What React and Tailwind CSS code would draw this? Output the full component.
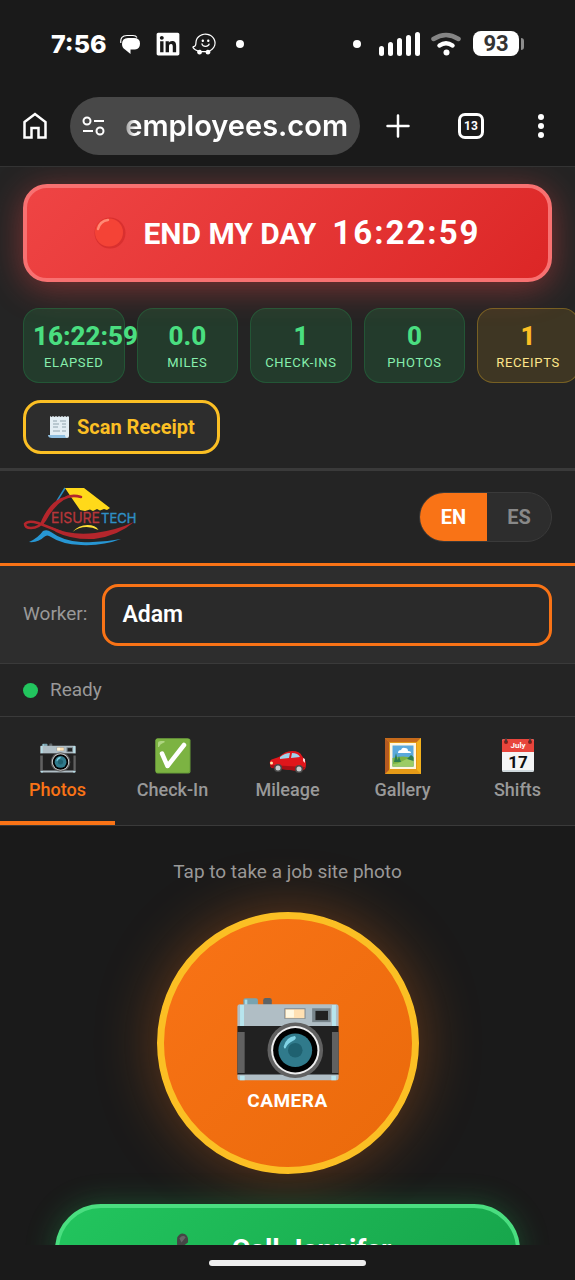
import { FaLinkedin, FaWaze } from 'react-icons/fa'

const STATS = [
  { value: '16:22:59', label: 'ELAPSED' },
  { value: '0.0', label: 'MILES' },
  { value: '1', label: 'CHECK-INS' },
  { value: '0', label: 'PHOTOS' },
  { value: '1', label: 'RECEIPTS', gold: true },
]

const TABS = [
  { label: 'Photos', Icon: CameraIcon, size: 'w-9 h-[30px] mt-[5px]', active: true },
  { label: 'Check-In', Icon: CheckIcon, size: 'w-9 h-9' },
  { label: 'Mileage', Icon: CarIcon, size: 'w-[38px] h-9' },
  { label: 'Gallery', Icon: FrameIcon, size: 'w-9 h-9' },
  { label: 'Shifts', Icon: CalendarIcon, size: 'w-9 h-9' },
]

function CameraIcon({ className }) {
  return (
    <svg className={className} viewBox="0 0 310 254" aria-hidden="true">
      <path d="M20 26V10q0-6 6-6h32q6 0 6 6v16z" fill="#78a3b0" />
      <path d="M24 8h8v18h-8z" fill="#a8dbe6" />
      <path d="M80 26V10q0-7 7-7h12q7 0 7 7v16z" fill="#5c6366" />
      <path d="M2 90V30q0-8 8-8h290q8 0 8 8v60z" fill="#b0bec5" />
      <path d="M10 24h12v64H10zM288 24h12v64h-12z" fill="#b7e5ee" />
      <path d="M2 88h306v148H2z" fill="#212121" />
      <path d="M2 234h306v10q0 8-8 8H10q-8 0-8-8z" fill="#b0bec5" />
      <path d="M10 238h14v14H10zM286 238h14v14h-14z" fill="#b7e5ee" />
      <path d="M2 106h22v124H2zM288 106h20v124h-20z" fill="#616161" />
      <path d="M144 34h64v32h-64z" fill="#82888b" />
      <path d="M147 37h58v27h-58z" fill="#ffe0b2" />
      <path d="M149 39h24v23h-24z" fill="#fff8e1" />
      <path d="M228 34h56v42h-56z" fill="#78858b" />
      <path d="M238 42h38v28h-38z" fill="#212121" />
      <circle cx="177" cy="161" r="84" fill="#616161" />
      <circle cx="177" cy="161" r="73" fill="#eeeeee" />
      <circle cx="177" cy="161" r="67" fill="#000" />
      <circle cx="177" cy="161" r="51" fill="#307a8b" />
      <circle cx="177" cy="161" r="22" fill="#1f6170" />
      <path d="M142 150q7-29 34-32 8 8-8 16-14 6-20 20-5 5-6-4z" fill="#81d4e6" />
    </svg>
  )
}

function CheckIcon({ className }) {
  return (
    <svg className={className} viewBox="0 0 36 36" aria-hidden="true">
      <rect x=".5" y=".5" width="35" height="35" rx="2" fill="#689f38" />
      <rect x=".5" y=".5" width="34" height="34" rx="2" fill="#7cb342" />
      <path d="M3 9V5q0-2 3-2h3q2 1-1 2-3 1-4 4z" fill="#aed581" />
      <path d="M7 15.500l5.500 12.500L29 7" fill="none" stroke="#fff" strokeWidth="4.500" strokeLinecap="round" strokeLinejoin="round" />
    </svg>
  )
}

function CarIcon({ className }) {
  return (
    <svg className={className} viewBox="0 0 38 36" aria-hidden="true">
      <path d="M1 26Q0 22 4 21l6-2q6-6 13-6 8 0 10 5l3 4q2 4 0 9l-4 2L3 30q-2-1-2-4z" fill="#e0161b" />
      <path d="M1 27l35 2-1 3-6 1-25-3q-3-1-3-3z" fill="#a80f15" />
      <path d="M11 19q5-4 10-4l-1 5-9 1zM23 15q6 0 8 4l-9 1z" fill="#9fd3ea" />
      <circle cx="9" cy="30" r="4" fill="#4a4a4a" />
      <circle cx="9" cy="30" r="2.500" fill="#c8ccce" />
      <circle cx="30" cy="31" r="4" fill="#4a4a4a" />
      <circle cx="30" cy="31" r="2.500" fill="#c8ccce" />
      <circle cx="2.500" cy="25" r="1.500" fill="#ffe9a8" />
      <path d="M34 20l2 1v4l-2-2z" fill="#ffd5d5" />
    </svg>
  )
}

function FrameIcon({ className }) {
  return (
    <svg className={className} viewBox="0 0 36 36" aria-hidden="true">
      <path d="M0 0h36v36H0z" fill="#e59a17" />
      <path d="M0 0h36l-4 4H4z" fill="#c66a1b" />
      <path d="M0 0l4 4v28l-4 4z" fill="#b65a20" />
      <path d="M36 0v36l-4-4V4z" fill="#f3b11c" />
      <path d="M5 5h26v26H5z" fill="#fff6e0" />
      <path d="M7.500 7.500h21v21h-21z" fill="#5aa9dc" />
      <path d="M7.500 20q10-3 21 0v8.500h-21z" fill="#7cb342" />
      <path d="M16 24q6-4 12.500-4v8.500h-21V26q5 0 8.500-2z" fill="#9ccc65" />
      <path d="M9 24l2-9 2 9zM12 24l2-6 2 6zM22 21l4-4 2.500 2v4z" fill="#2e7d4f" />
      <path d="M13 15q0-3 3-3 1-3 4-2 3 0 3 3 3 0 3 2z" fill="#fff" />
    </svg>
  )
}

function CalendarIcon({ className }) {
  return (
    <svg className={className} viewBox="0 0 36 36" aria-hidden="true">
      <rect x="2" y="1" width="32" height="33" rx="2" fill="#f5f5f5" />
      <path d="M2 14V3q0-2 2-2h28q2 0 2 2v11z" fill="#e8453c" />
      <path d="M2 32h32q0 2-2 2H4q-2 0-2-2z" fill="#cfd8dc" />
      <circle cx="6" cy="4" r="2" fill="#7b1f1a" />
      <circle cx="30" cy="4" r="2" fill="#7b1f1a" />
      <path d="M6 0v4M30 0v4" stroke="#3b3b3b" strokeWidth="1.500" />
      <text x="18" y="10" textAnchor="middle" fontSize="8" fontWeight="700" fill="#fff">July</text>
      <text x="18" y="30" textAnchor="middle" fontSize="17" fontWeight="700" fill="#111">17</text>
    </svg>
  )
}

function ReceiptIcon() {
  return (
    <svg className="w-[22px] h-6" viewBox="0 0 22 24" aria-hidden="true">
      <path d="M2 1l1.500 1L5 1l1.500 1L8 1l1.500 1L11 1l1.500 1L14 1l1.500 1L17 1l1.500 1L20 1l1 1v19q0 2-2 2H5L2 20z" fill="#e3eef4" />
      <path d="M0 20h17q0 3 3 3H4q-4 0-4-3z" fill="#8fbfe0" />
      <path d="M5 6h4M12 6h6M5 9h6M14 9h4M5 12h5M14 12h4M5 16h7M14 16h4" stroke="#90a4ae" strokeWidth="1" />
    </svg>
  )
}

function Logo() {
  return (
    <svg className="w-[118px] h-[60px]" viewBox="0 0 118 60" role="img" aria-label="Leisure Tech">
      <path d="M42 1L34 14" stroke="#2a8fc4" strokeWidth="1.500" fill="none" />
      <path d="M42 1h19l26 20-3 2-3-1-4 1.500-3-1.500-4 2-3-1.500-5 1.500-5-1L48 10z" fill="#ffd91a" />
      <path d="M49.500 45q6-7 15-7 8 0 11 5-6-3-12-3-8 0-14 5z" fill="#ffe135" />
      <text x="28" y="36" fontSize="14" fill="#b7363a" stroke="#b7363a" strokeWidth=".3" fontFamily="Inter, sans-serif">EISURE</text>
      <text x="78" y="36" fontSize="13" fill="#2f8fc4" stroke="#2f8fc4" strokeWidth=".4" fontFamily="Inter, sans-serif">TECH</text>
      <path d="M58 10Q48 7 40 12 30 18 22 33 16 41 8 41 2 41 2 37 5 33 15 36 28 41 38 45" fill="none" stroke="#b4262c" strokeWidth="2.500" strokeLinecap="round" />
      <path d="M46 9Q34 14 26 27L20 38 17 37Q25 17 38 11z" fill="#b4262c" />
      <path d="M28 40q20 9 44 6 22-3 39-11-16 14-40 17-22 1-38-7z" fill="#b4262c" />
      <path d="M6 55q9-4 14-11 4-2 8 1 12 9 30 10 20 1 40-3-18 7-40 6-20-1-30-8-4-3-7 0-6 6-15 5z" fill="#2796d3" />
    </svg>
  )
}

function StatusBar() {
  return (
    <div className="flex items-center justify-between h-[87px] pl-[51px] pr-14 font-[Inter,sans-serif]">
      <div className="flex items-center">
        <span className="text-[25px] font-extrabold leading-8 w-[57px] whitespace-nowrap">7:56</span>
        <svg className="w-5 h-5 ml-3" viewBox="0 0 20 20" aria-hidden="true">
          <path d="M.800 9Q0 1.500 7 1.500h6q3 0 4 2" fill="none" stroke="#fff" strokeWidth="1.200" />
          <path d="M8 4h6q6 0 6 5.500 0 5.500-5 6h-4.500V20L5 15.500Q2 13.500 2 10q0-6 6-6z" fill="#fff" />
        </svg>
        <FaLinkedin className="w-6 h-[26px] ml-4" />
        <FaWaze className="w-6 h-[26px] ml-3" />
        <span className="w-2 h-2 ml-5 rounded-full bg-white" />
      </div>
      <div className="flex items-center">
        <span className="w-2 h-2 mr-[18px] rounded-full bg-white" />
        <div className="flex items-end gap-1 h-6">
          <span className="w-[5px] h-2.5 rounded-full bg-white" />
          <span className="w-[5px] h-3.5 rounded-full bg-white" />
          <span className="w-[5px] h-[18px] rounded-full bg-white" />
          <span className="w-[5px] h-[21px] rounded-full bg-white" />
          <span className="w-[5px] h-6 rounded-full bg-white" />
        </div>
        <svg className="w-[30px] h-6 ml-[11px]" viewBox="0 0 30 24" aria-hidden="true">
          <path d="M2.500 7Q15-1 27.500 7" fill="none" stroke="#858585" strokeWidth="4.500" strokeLinecap="round" />
          <path d="M8.500 13.500Q15 9 21.500 13.500" fill="none" stroke="#fff" strokeWidth="4.500" strokeLinecap="round" />
          <circle cx="15.500" cy="20.500" r="3" fill="#fff" />
        </svg>
        <span className="flex items-center justify-center w-[46px] h-[25px] ml-3 rounded-lg bg-white text-[#333] text-[22px] leading-6 font-bold font-[Roboto,sans-serif]">93</span>
        <span className="w-[3px] h-3 ml-0.5 -mr-[5px] rounded-r-sm bg-[#8d8d8d]" />
      </div>
    </div>
  )
}

function BrowserBar() {
  return (
    <div className="flex items-center h-20 pb-3 pt-2.5 pl-[23px] pr-7 border-b border-[#333]">
      <button aria-label="Home">
        <svg className="w-6 h-[27px]" viewBox="0 0 24 27" fill="none" stroke="#fff" strokeWidth="2.500" aria-hidden="true">
          <path d="M1.500 10L12 2l10.500 8v15.500H15.500V16h-7v9.500h-7z" />
        </svg>
      </button>
      <div className="flex flex-1 items-center h-[58px] ml-[23px] pl-3 pr-3 rounded-full bg-[#484848] overflow-hidden">
        <svg className="w-[23px] h-5 shrink-0" viewBox="0 0 23 20" fill="none" stroke="#fff" strokeWidth="2" aria-hidden="true">
          <circle cx="5" cy="5" r="3.500" />
          <path d="M12 5h10M1 15h10" />
          <circle cx="18" cy="15" r="3.500" />
        </svg>
        <input
          aria-label="Address"
          className="flex-1 min-w-0 h-10 ml-3 bg-transparent text-right text-[29px] font-semibold font-[Inter,sans-serif] outline-none mask-l-from-92% mask-l-to-100%"
          defaultValue="employees.com"
        />
      </div>
      <button aria-label="New tab" className="ml-[26px]">
        <svg className="w-6 h-6" viewBox="0 0 24 24" stroke="#fff" strokeWidth="2.500" strokeLinecap="round" aria-hidden="true">
          <path d="M12 1.500v21M1.500 12h21" />
        </svg>
      </button>
      <button aria-label="Tabs" className="flex items-center justify-center w-[26px] h-[26px] ml-12 border-[3px] border-white rounded-[7px] text-xs font-bold">13</button>
      <button aria-label="Menu" className="flex flex-col items-center gap-[3px] w-3 ml-[51px]">
        <span className="w-1.5 h-1.5 rounded-full bg-white" />
        <span className="w-1.5 h-1.5 rounded-full bg-white" />
        <span className="w-1.5 h-1.5 rounded-full bg-white" />
      </button>
    </div>
  )
}

function DayPanel() {
  return (
    <section className="px-[23px] pt-[17px] pb-[14px] bg-[#242424] border-b-[3px] border-[#3a3a3a] overflow-hidden">
      <button className="flex items-center justify-center w-full h-[98px] rounded-3xl border-4 border-[#f87171] bg-linear-135 from-[#ef4444] to-[#dc2626] shadow-[0_6px_34px_rgba(239,68,68,0.45)]">
        <svg className="w-8 h-8 mr-[17px]" viewBox="0 0 32 32" aria-hidden="true">
          <circle cx="16" cy="16" r="15.500" fill="#d9302f" />
          <circle cx="15" cy="15.500" r="14" fill="#f44336" />
          <path d="M4 12q2-8 10-9" fill="none" stroke="#ff8a75" strokeWidth="2.500" strokeLinecap="round" />
        </svg>
        <span className="text-[30px] font-bold">END MY DAY</span>
        <span className="ml-4 text-[33px] font-bold tracking-[2px]">16:22:59</span>
      </button>
      <div className="flex gap-3 mt-[26px]">
        {STATS.map(({ value, label, gold }) => (
          <div
            key={label}
            className={`w-[19.2%] h-[75px] shrink-0 px-[9px] pt-[11px] rounded-2xl border text-center whitespace-nowrap ${
              gold
                ? 'bg-[#fbbf24]/12 border-[#fbbf24]/30 text-[#fbbf24]'
                : 'bg-[#22c55e]/15 border-[#22c55e]/20 text-[#4ade80]'
            }`}
          >
            <div className="text-[26px] leading-8 font-extrabold">{value}</div>
            <div className={`text-[13px] leading-[22px] tracking-wider ${gold ? 'text-[#fde68a]' : 'text-[#86efac]'}`}>{label}</div>
          </div>
        ))}
      </div>
      <button className="flex items-center gap-[7px] h-[54px] mt-[17px] px-[22px] rounded-[18px] border-[3px] border-[#fbbf24] bg-[#2d2d2d] text-[#fbbf24] text-xl font-bold">
        <ReceiptIcon />
        Scan Receipt
      </button>
    </section>
  )
}

export default function App() {
  return (
    <div className="flex flex-col h-screen overflow-hidden bg-[#1a1a1a] text-white font-[Roboto,sans-serif]">
      <StatusBar />
      <BrowserBar />

      <main className="flex-1 min-h-0 overflow-hidden">
        <DayPanel />

        <header className="flex items-center justify-between h-[95px] px-[23px] bg-[#242424] border-b-[3px] border-[#f97316]">
          <Logo />
          <div className="flex h-[50px] rounded-full border border-[#3a3a3a] bg-[#2d2d2d] text-xl font-bold overflow-hidden">
            <button className="w-[67px] bg-[#f97316]">EN</button>
            <button className="w-16 text-[#888]">ES</button>
          </div>
        </header>

        <div className="flex items-center gap-[15px] h-[98px] px-[23px] bg-[#2d2d2d] border-b border-[#3a3a3a]">
          <label htmlFor="worker" className="text-[19px] text-[#999]">Worker:</label>
          <input
            id="worker"
            className="flex-1 min-w-0 h-[62px] px-[17px] rounded-2xl border-[3px] border-[#f97316] bg-[#2a2a2a] text-[23px] font-semibold outline-none"
            defaultValue="Adam"
          />
        </div>

        <div className="flex items-center gap-3 h-[53px] px-[23px] bg-[#242424] border-b border-[#3a3a3a] text-[19px] text-[#999]">
          <span className="w-[15px] h-[15px] rounded-full bg-[#22c55e]" />
          Ready
        </div>

        <nav className="grid grid-cols-5 h-[109px] bg-[#242424] border-b border-[#3a3a3a]">
          {TABS.map(({ label, Icon, size, active }) => (
            <button
              key={label}
              className={`flex flex-col items-center pt-[21px] border-b-4 text-lg leading-6 font-medium ${
                active ? 'border-[#f97316] text-[#f97316]' : 'border-transparent text-[#999]'
              }`}
            >
              <span className="flex items-start justify-center h-10">
                <Icon className={size} />
              </span>
              {label}
            </button>
          ))}
        </nav>

        <section className="flex flex-col items-center pt-8">
          <p className="text-[19px] leading-7 text-[#999]">Tap to take a job site photo</p>
          <button className="flex flex-col items-center justify-center shrink-0 w-[262px] h-[262px] mt-[26px] pt-6 rounded-full border-[7px] border-[#fbbf24] bg-linear-135 from-[#f97316] to-[#ea6a0a] shadow-[0_0_60px_rgba(249,115,22,0.35)]">
            <CameraIcon className="w-[104px] h-[84px]" />
            <span className="mt-2 text-[19px] leading-6 font-bold tracking-wide">CAMERA</span>
          </button>
          <button className="flex items-center justify-center gap-6 w-[81%] h-[92px] mt-[30px] pr-3 shrink-0 rounded-[46px] border-4 border-[#4ade80] bg-linear-135 from-[#22c55e] to-[#16a34a] text-[28px] font-bold shadow-[0_0_30px_rgba(34,197,94,0.3)]">
            <svg className="w-9 h-[34px]" viewBox="0 0 28 32" aria-hidden="true">
              <path d="M2 4Q5-1 9 1q4 2 3 8l-4 3q2 6 7 9l5-3q5 2 6 6-2 7-9 7Q0 26 2 4z" fill="#454545" />
              <path d="M4 5q3-4 6-1l-4 5z" fill="#666" />
            </svg>
            Call Jennifer
          </button>
        </section>
      </main>

      <footer className="flex justify-center h-[35px] pt-[15px] shrink-0">
        <span className="w-[157px] h-1.5 rounded-full bg-[#eee]" />
      </footer>
    </div>
  )
}
